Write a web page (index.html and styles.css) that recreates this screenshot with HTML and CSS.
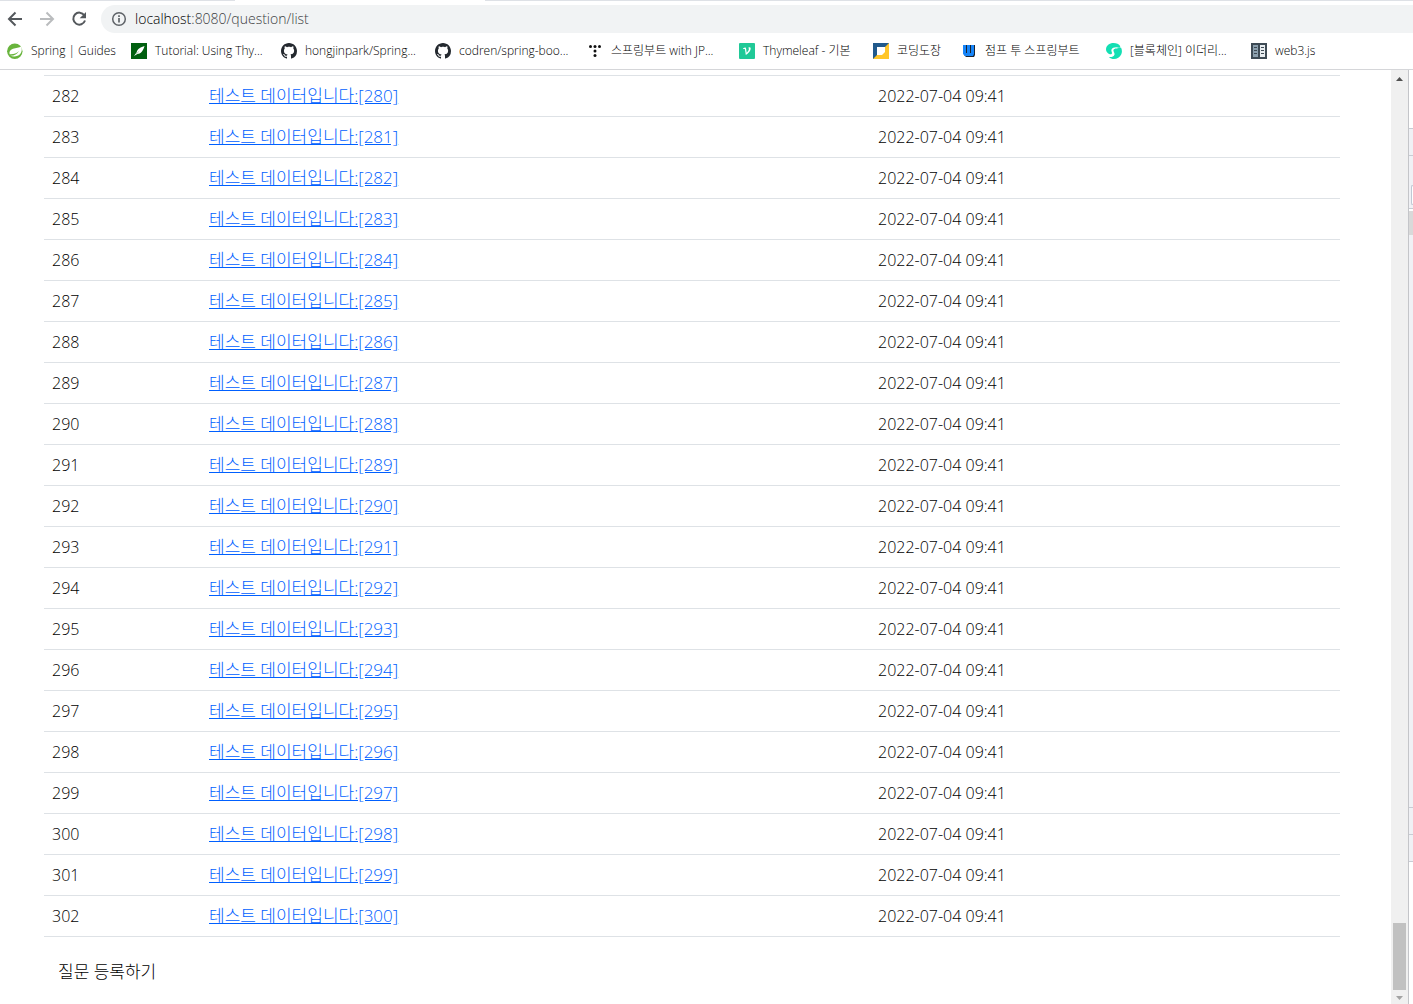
FILE: index.html
```html
<!DOCTYPE html>
<html lang="ko">
<head>
<meta charset="utf-8">
<title>질문 목록</title>
<link rel="stylesheet" href="styles.css">
</head>
<body>
<header class="chrome">
  <div class="tabs"><span class="tab-active"></span></div>
  <div class="toolbar">
    <button class="tool" type="button" aria-label="뒤로"><svg width="16" height="16" viewBox="0 0 16 16"><path d="M15 8H2M8.500 1.500 2 8l6.500 6.500" fill="none" stroke="#54585c" stroke-width="2"/></svg></button>
    <button class="tool" type="button" aria-label="앞으로"><svg width="16" height="16" viewBox="0 0 16 16"><path d="M1 8h13M7.500 1.500 14 8l-6.500 6.500" fill="none" stroke="#babcbe" stroke-width="2"/></svg></button>
    <button class="tool" type="button" aria-label="새로고침"><svg width="16" height="16" viewBox="0 0 16 16"><path d="M13.300 4.300A6 6 0 1 0 14 9.500" fill="none" stroke="#54585c" stroke-width="2"/><path d="M15 1v6.300H8.700z" fill="#54585c"/></svg></button>
    <div class="address">
      <svg width="16" height="16" viewBox="0 0 16 16"><circle cx="8" cy="8" r="6.300" fill="none" stroke="#5f6368" stroke-width="1.500"/><path d="M8 7v4.500M8 4.300v1.700" stroke="#5f6368" stroke-width="1.700"/></svg>
      <span class="url"><span class="host">localhost</span>:8080/question/list</span>
    </div>
  </div>
  <nav class="bookmarks">
    <a class="bookmark" href="#"><svg width="16" height="16" viewBox="0 0 16 16"><circle cx="7.800" cy="8.200" r="7.700" fill="#68b43c"/><path d="M14.500 3.200C12 5.300 9 4.600 6 5.700 3 6.800 2 9 2.600 11.200c3.200.3 7-.4 9.400-3.200-1.600 3.200-5 5-8.800 4.800 3.600 1.500 8 .8 10.200-2 1.700-2.300 1.600-5 1.100-7.600z" fill="#fff"/></svg><span>Spring | Guides</span></a>
    <a class="bookmark" href="#"><svg width="16" height="16" viewBox="0 0 16 16"><path d="M0 0h16v16H0z" fill="#005f0f"/><path d="M13.500 3C10 4 6.200 6 5.700 9.300L3 13l3.800-2.200C10 10.800 12.500 7 13.500 3z" fill="#fff"/><path d="m5.200 10.800 3-2.600" stroke="#8db894" stroke-width=".6"/></svg><span>Tutorial: Using Thy...</span></a>
    <a class="bookmark" href="#"><svg width="16" height="16" viewBox="0 0 16 16"><path fill="#24292f" d="M8 0C3.580 0 0 3.580 0 8c0 3.540 2.290 6.530 5.470 7.590.4.070.55-.17.55-.38 0-.19-.01-.82-.01-1.490-2.010.37-2.530-.49-2.690-.94-.09-.23-.48-.94-.82-1.130-.28-.15-.68-.52-.01-.53.63-.01 1.080.58 1.230.82.72 1.210 1.870.87 2.330.66.070-.52.280-.87.510-1.070-1.780-.2-3.640-.89-3.640-3.950 0-.87.310-1.590.82-2.150-.08-.2-.36-1.020.08-2.120 0 0 .67-.21 2.200.82.640-.18 1.320-.27 2-.27s1.360.09 2 .27c1.530-1.040 2.200-.82 2.200-.82.440 1.100.160 1.920.080 2.120.51.56.82 1.270.82 2.150 0 3.070-1.870 3.750-3.650 3.950.29.25.54.73.54 1.480 0 1.070-.01 1.930-.01 2.200 0 .21.15.46.55.38A8.010 8.010 0 0 0 16 8c0-4.420-3.580-8-8-8z"/></svg><span>hongjinpark/Spring...</span></a>
    <a class="bookmark" href="#"><svg width="16" height="16" viewBox="0 0 16 16"><path fill="#24292f" d="M8 0C3.580 0 0 3.580 0 8c0 3.540 2.290 6.530 5.470 7.590.4.070.55-.17.55-.38 0-.19-.01-.82-.01-1.490-2.010.37-2.530-.49-2.690-.94-.09-.23-.48-.94-.82-1.130-.28-.15-.68-.52-.01-.53.63-.01 1.080.58 1.230.82.72 1.210 1.870.87 2.330.66.070-.52.280-.87.510-1.070-1.780-.2-3.640-.89-3.640-3.950 0-.87.310-1.590.82-2.150-.08-.2-.36-1.020.08-2.120 0 0 .67-.21 2.200.82.640-.18 1.320-.27 2-.27s1.360.09 2 .27c1.530-1.040 2.200-.82 2.200-.82.440 1.100.160 1.920.080 2.120.51.56.82 1.270.82 2.150 0 3.070-1.870 3.750-3.650 3.950.29.25.54.73.54 1.480 0 1.070-.01 1.930-.01 2.200 0 .21.15.46.55.38A8.010 8.010 0 0 0 16 8c0-4.420-3.580-8-8-8z"/></svg><span>codren/spring-boo...</span></a>
    <a class="bookmark" href="#"><svg width="16" height="16" viewBox="0 0 16 16"><g fill="#111"><circle cx="3.500" cy="3.500" r="1.500"/><circle cx="8" cy="3.500" r="1.500"/><circle cx="12.500" cy="3.500" r="1.500"/><circle cx="8" cy="8" r="1.500"/><circle cx="8" cy="12.500" r="1.500"/></g></svg><span>스프링부트 with JP...</span></a>
    <a class="bookmark" href="#"><svg width="16" height="16" viewBox="0 0 16 16"><rect width="16" height="16" rx="1" fill="#20c997"/><path d="M4 5.300 6 4.500c.7 0 1 .5 1.100 1.300l.6 4C9 8.500 9.800 7.200 9.900 6c0-.7-.3-1-.7-1.100.2-.5 1-.8 1.600-.6 1 .3 1.100 1.400.6 2.600-.8 1.900-2.600 3.800-4.600 5.200l-.9-6.200-1.600.1z" fill="#fff"/></svg><span>Thymeleaf - 기본</span></a>
    <a class="bookmark" href="#"><svg width="16" height="16" viewBox="0 0 16 16"><path d="M0 0h16v16H0z" fill="#21598b"/><path d="M16 0v16H0z" fill="#ffc629"/><path d="M4 4h8v5l-3 3H4z" fill="#fff"/></svg><span>코딩도장</span></a>
    <a class="bookmark" href="#"><svg width="16" height="16" viewBox="0 0 16 16"><path d="M3 2h11v10l-1 2H5l-2-2z" fill="#1b2430"/><path d="M2 2h3v8h1V2h3v8h1V2h3v9l-1 2H4l-2-2z" fill="#1684f8"/><path d="M5.500 2v8M9.500 2v8" stroke="#1b2430"/></svg><span>점프 투 스프링부트</span></a>
    <a class="bookmark" href="#"><svg width="16" height="16" viewBox="0 0 16 16"><path d="M0 6.500C0 2.500 3.500 0 7.500 0c3 0 5.500 1 6.800 3.300L13.500 5C11 3.600 6.500 4 5.500 6.500c-.5 1.500.5 2.500.5 3.500 0 1-1 1.500-2.200 1.200C1.500 10.500 0 8.500 0 6.500z" fill="#13dfb3"/><path d="M15 4.500c1 2 1.300 4.500.3 6.800C14 14.500 11 16 8 16c-2 0-3.800-.5-5-2 2.500.3 5-.5 5.500-2.500.3-1.800-1.500-3-1-4.500C8.500 5 12 5.500 15 4.500z" fill="#13dfb3"/></svg><span>[블록체인] 이더리...</span></a>
    <a class="bookmark" href="#"><svg width="16" height="16" viewBox="0 0 16 16"><path d="M0 0h16v16H0z" fill="#3e4b55"/><path d="M2 2h5v12H2z" fill="#8ca0ae"/><path d="M9 2h5v12H9z" fill="#e8edf0"/><path d="M3 4.500h3M3 7.500h3M3 10.500h3M10 4.500h3M10 7.500h3M10 10.500h3" stroke="#3e4b55"/></svg><span>web3.js</span></a>
  </nav>
</header>
<div class="viewport">
  <main class="page">
    <table class="questions">
      <colgroup><col class="col-no"><col class="col-title"><col class="col-date"></colgroup>
      <tbody>
        <tr><td>282</td><td><a href="#">테스트 데이터입니다:[280]</a></td><td>2022-07-04 09:41</td></tr>
        <tr><td>283</td><td><a href="#">테스트 데이터입니다:[281]</a></td><td>2022-07-04 09:41</td></tr>
        <tr><td>284</td><td><a href="#">테스트 데이터입니다:[282]</a></td><td>2022-07-04 09:41</td></tr>
        <tr><td>285</td><td><a href="#">테스트 데이터입니다:[283]</a></td><td>2022-07-04 09:41</td></tr>
        <tr><td>286</td><td><a href="#">테스트 데이터입니다:[284]</a></td><td>2022-07-04 09:41</td></tr>
        <tr><td>287</td><td><a href="#">테스트 데이터입니다:[285]</a></td><td>2022-07-04 09:41</td></tr>
        <tr><td>288</td><td><a href="#">테스트 데이터입니다:[286]</a></td><td>2022-07-04 09:41</td></tr>
        <tr><td>289</td><td><a href="#">테스트 데이터입니다:[287]</a></td><td>2022-07-04 09:41</td></tr>
        <tr><td>290</td><td><a href="#">테스트 데이터입니다:[288]</a></td><td>2022-07-04 09:41</td></tr>
        <tr><td>291</td><td><a href="#">테스트 데이터입니다:[289]</a></td><td>2022-07-04 09:41</td></tr>
        <tr><td>292</td><td><a href="#">테스트 데이터입니다:[290]</a></td><td>2022-07-04 09:41</td></tr>
        <tr><td>293</td><td><a href="#">테스트 데이터입니다:[291]</a></td><td>2022-07-04 09:41</td></tr>
        <tr><td>294</td><td><a href="#">테스트 데이터입니다:[292]</a></td><td>2022-07-04 09:41</td></tr>
        <tr><td>295</td><td><a href="#">테스트 데이터입니다:[293]</a></td><td>2022-07-04 09:41</td></tr>
        <tr><td>296</td><td><a href="#">테스트 데이터입니다:[294]</a></td><td>2022-07-04 09:41</td></tr>
        <tr><td>297</td><td><a href="#">테스트 데이터입니다:[295]</a></td><td>2022-07-04 09:41</td></tr>
        <tr><td>298</td><td><a href="#">테스트 데이터입니다:[296]</a></td><td>2022-07-04 09:41</td></tr>
        <tr><td>299</td><td><a href="#">테스트 데이터입니다:[297]</a></td><td>2022-07-04 09:41</td></tr>
        <tr><td>300</td><td><a href="#">테스트 데이터입니다:[298]</a></td><td>2022-07-04 09:41</td></tr>
        <tr><td>301</td><td><a href="#">테스트 데이터입니다:[299]</a></td><td>2022-07-04 09:41</td></tr>
        <tr><td>302</td><td><a href="#">테스트 데이터입니다:[300]</a></td><td>2022-07-04 09:41</td></tr>
      </tbody>
    </table>
    <a class="create" href="#">질문 등록하기</a>
  </main>
  <div class="scrollbar" aria-hidden="true">
    <svg width="7" height="4" viewBox="0 0 7 4"><path d="M0 4 3.500 0 7 4z" fill="#505050"/></svg>
    <span class="thumb"></span>
    <svg width="7" height="4" viewBox="0 0 7 4"><path d="M0 0h7L3.500 4z" fill="#a3a3a3"/></svg>
  </div>
  <div class="behind" aria-hidden="true">
    <span class="b-top"></span>
    <span class="b-bar"></span>
    <span class="b-box"><i></i></span>
    <span class="b-tab"></span>
    <span class="b-fill"></span>
    <span class="b-bar"></span>
    <span class="b-bar"></span>
    <span class="b-end"></span>
  </div>
</div>
</body>
</html>
```
FILE: styles.css
```css
* { box-sizing: border-box; }

body {
  margin: 0;
  min-height: 100vh;
  display: flex;
  flex-direction: column;
  background: #fff;
  color: #000;
  font-family: "Open Sans", "Noto Sans CJK KR", sans-serif;
  font-size: 16px;
  font-weight: 300;
}

/* browser bars */
.chrome { border-bottom: 1px solid #d5d6d9; }

.tabs {
  display: flex;
  height: 1px;
  padding-left: 235px;
  background: #dee1e6;
}
.tab-active { width: 250px; background: #fff; }

.toolbar {
  display: flex;
  align-items: center;
  gap: 16px;
  padding: 4px 0 0 7px;
}
.tool {
  display: flex;
  padding: 0;
  border: 0;
  background: none;
}
.address {
  flex: 1;
  display: flex;
  align-items: center;
  gap: 8px;
  height: 28px;
  margin-left: -2px;
  padding-left: 10px;
  border-radius: 14px 0 0 14px;
  background: #f1f3f4;
}
.url { color: #3c4043; font-size: 14px; line-height: 20px; padding-bottom: 1px; }
.host { color: #000; }

.bookmarks {
  display: grid;
  grid-template-columns: 124px 150px 154px 152px 152px 134px 88px 145px 145px auto;
  align-items: center;
  height: 36px;
  padding-left: 7px;
}
.bookmark {
  display: flex;
  align-items: center;
  gap: 8px;
  color: #000;
  font-size: 12px;
  line-height: 16px;
  white-space: nowrap;
  text-decoration: none;
}
.bookmark svg { flex: none; }

/* page */
.viewport {
  flex: 1;
  display: grid;
  grid-template-columns: 1fr 17px 5px;
}
.page { padding: 5px 51px 0 44px; }

.questions {
  width: 100%;
  table-layout: fixed;
  border-collapse: collapse;
  border-top: 1px solid #dee2e6;
}
.col-no { width: 157px; }
.col-title { width: 669px; }
.questions td {
  height: 41px;
  padding: 8px;
  border-bottom: 1px solid #dee2e6;
  line-height: 24px;
}
.questions a { color: #0060ff; font-size: 17px; }

.create {
  display: inline-block;
  padding: 23px 14px 20px;
  color: #000;
  font-size: 17px;
  line-height: 24px;
  text-decoration: none;
}

.scrollbar {
  display: flex;
  flex-direction: column;
  align-items: center;
  padding: 7px 0 4px;
  background: #f0f0f0;
}
.thumb {
  width: 13px;
  height: 67px;
  margin: auto 0 6px;
  background: #c1c1c1;
}

/* edge of the window lying behind */
.behind {
  display: flex;
  flex-direction: column;
  border-left: 1px solid #c4c5c9;
}
.b-top { height: 59px; border-bottom: 1px solid #c8ccd4; }
.b-bar { height: 27px; border-bottom: 1px solid #c8ccd4; background: #f0f1f5; }
.b-box { height: 53px; padding: 29px 0 3px 2px; border-bottom: 1px solid #c8ccd4; background: #f0f1f5; }
.b-box i { display: block; height: 20px; border: 1px solid #c0c8d4; border-right: 0; border-radius: 2px 0 0 2px; background: #fff; }
.b-tab { height: 24px; margin-top: 2px; background: #d9d9d9; }
.b-fill { flex: 1; border-bottom: 1px solid #c8ccd4; background: #f0f1f5; }
.b-end { height: 142px; }
```
